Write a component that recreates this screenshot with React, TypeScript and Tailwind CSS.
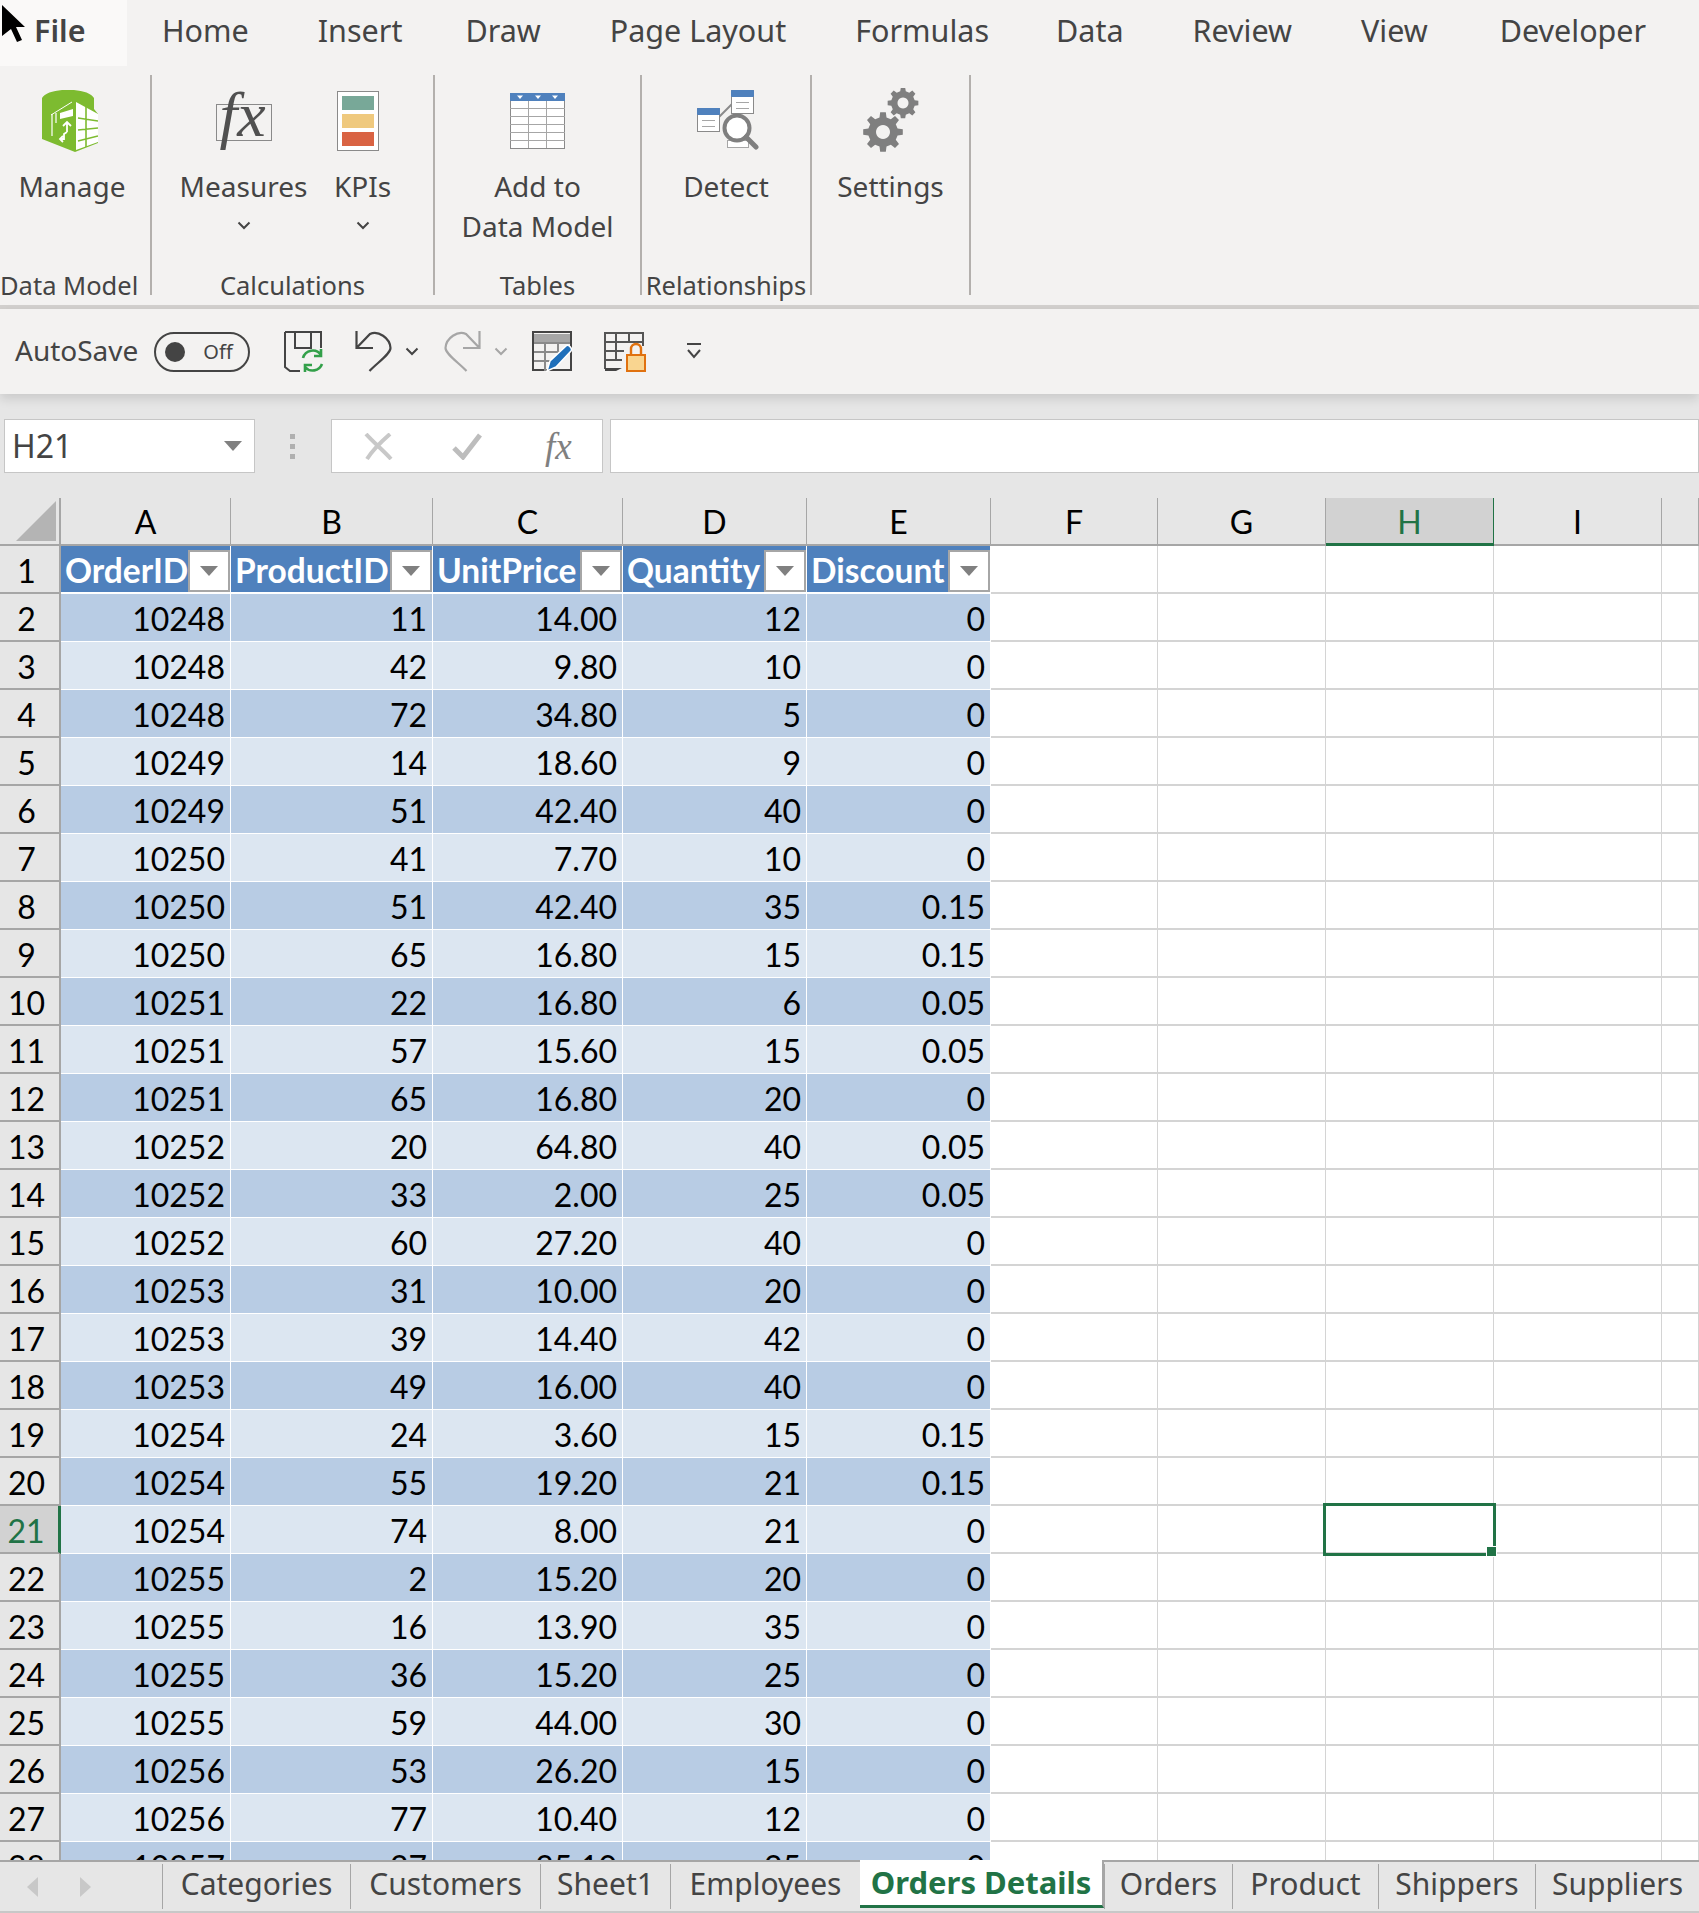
import React from 'react';

// Sheet data: [OrderID, ProductID, UnitPrice, Quantity, Discount]
const rows: string[][] = [
  ['10248', '11', '14.00', '12', '0'],
  ['10248', '42', '9.80', '10', '0'],
  ['10248', '72', '34.80', '5', '0'],
  ['10249', '14', '18.60', '9', '0'],
  ['10249', '51', '42.40', '40', '0'],
  ['10250', '41', '7.70', '10', '0'],
  ['10250', '51', '42.40', '35', '0.15'],
  ['10250', '65', '16.80', '15', '0.15'],
  ['10251', '22', '16.80', '6', '0.05'],
  ['10251', '57', '15.60', '15', '0.05'],
  ['10251', '65', '16.80', '20', '0'],
  ['10252', '20', '64.80', '40', '0.05'],
  ['10252', '33', '2.00', '25', '0.05'],
  ['10252', '60', '27.20', '40', '0'],
  ['10253', '31', '10.00', '20', '0'],
  ['10253', '39', '14.40', '42', '0'],
  ['10253', '49', '16.00', '40', '0'],
  ['10254', '24', '3.60', '15', '0.15'],
  ['10254', '55', '19.20', '21', '0.15'],
  ['10254', '74', '8.00', '21', '0'],
  ['10255', '2', '15.20', '20', '0'],
  ['10255', '16', '13.90', '35', '0'],
  ['10255', '36', '15.20', '25', '0'],
  ['10255', '59', '44.00', '30', '0'],
  ['10256', '53', '26.20', '15', '0'],
  ['10256', '77', '10.40', '12', '0'],
  ['10257', '27', '35.10', '25', '0'],
];

const headers = ['OrderID', 'ProductID', 'UnitPrice', 'Quantity', 'Discount'];
const letters = ['A', 'B', 'C', 'D', 'E', 'F', 'G', 'H', 'I', ''];
const gridCols = 'grid grid-cols-[61px_170px_202px_190px_184px_184px_167px_168px_168px_168px_1fr]';

const ribbonTabs = [
  { name: 'Home', cls: '' },
  { name: 'Insert', cls: 'mr-[-6px]' },
  { name: 'Draw', cls: '' },
  { name: 'Page Layout', cls: '' },
  { name: 'Formulas', cls: 'mr-[-2px]' },
  { name: 'Data', cls: '' },
  { name: 'Review', cls: '' },
  { name: 'View', cls: 'mr-[3px]' },
  { name: 'Developer', cls: '' },
];

const sheetTabs = [
  { name: 'Categories', w: 'w-[188px]' },
  { name: 'Customers', w: 'w-[190px]' },
  { name: 'Sheet1', w: 'w-[130px]' },
  { name: 'Employees', w: 'w-[190px]' },
  { name: 'Orders Details', w: 'w-[244px]', active: true },
  { name: 'Orders', w: 'w-[128px]' },
  { name: 'Product', w: 'w-[146px]' },
  { name: 'Shippers', w: 'w-[157px]' },
  { name: 'Suppliers', w: 'w-[164px]' },
];

function gearPath(cx: number, cy: number, rOut: number, rIn: number, teeth: number) {
  const pts: string[] = [];
  const step = (Math.PI * 2) / teeth;
  for (let i = 0; i < teeth; i++) {
    const a = i * step - Math.PI / 2;
    const corners: [number, number][] = [
      [a - step * 0.3, rIn],
      [a - step * 0.18, rOut],
      [a + step * 0.18, rOut],
      [a + step * 0.3, rIn],
    ];
    corners.forEach(([ang, r]) => {
      pts.push(`${(cx + Math.cos(ang) * r).toFixed(2)} ${(cy + Math.sin(ang) * r).toFixed(2)}`);
    });
  }
  return `M${pts.join('L')}Z`;
}

function ManageIcon() {
  return (
    <svg width="56" height="62" viewBox="0 0 56 62" className="mr-[4px]">
      <path d="M0 8C6 -3 46 -3 52 8V19L56 24V53L33 62L0 49Z" fill="#7dbb30" />
      <path d="M34 12L56 24V52L34 60Z" fill="#fff" />
      <path d="M36 28L56 31M36 40L56 38M36 51L56 46M44 16V57" stroke="#7dbb30" strokeWidth="1.6" fill="none" />
      <path d="M18 23L31 19V26L18 29Z" fill="#fff" />
      <path d="M10 24V46M14 23V33" stroke="#fff" strokeWidth="1.2" />
      <path d="M9 25L30 12" stroke="#fff" strokeWidth="1" />
      <path d="M25 42V33M21 36L25 32L29 36M25 42L22 44V49H19M21 46L18 49L21 52" stroke="#fff" strokeWidth="1.8" fill="none" />
    </svg>
  );
}

function FxIcon() {
  return (
    <div className="relative h-[58px] w-[56px]">
      <div className="absolute left-0 right-0 top-[12px] h-[37px] border border-[#8a8a8a]" />
      <span className="absolute left-[4px] top-[-15px] text-[64px] italic leading-[76px] text-[#505050] [font-family:'Liberation_Serif',serif]">
        fx
      </span>
    </div>
  );
}

function KpiIcon() {
  return (
    <div className="mr-[10px] flex h-[60px] w-[42px] flex-col gap-[4px] border border-[#8a8a8a] bg-white p-[4px]">
      <div className="h-[14px] bg-[#78a898]" />
      <div className="h-[14px] bg-[#efc97e]" />
      <div className="h-[14px] bg-[#d96343]" />
    </div>
  );
}

function TableIcon() {
  return (
    <svg width="56" height="56" viewBox="0 0 56 56">
      <rect x="0.5" y="0.5" width="54" height="55" fill="#fff" stroke="#8a8a8a" />
      <rect x="0" y="0" width="55" height="8" fill="#4f81bd" />
      <path d="M18.5 8V55M36.5 8V55M0 15.5H55M0 23.5H55M0 31.5H55M0 39.5H55M0 47.5H55" stroke="#a6a6a6" fill="none" />
      <path d="M7 2.5H13L10 6ZM25 2.5H31L28 6ZM42 2.5H48L45 6Z" fill="#fff" />
    </svg>
  );
}

function DetectIcon() {
  const tbl = (x: number, y: number) => (
    <g>
      <rect x={x + 0.5} y={y + 0.5} width="22" height="23" fill="#fff" stroke="#8a8a8a" />
      <rect x={x} y={y} width="23" height="7" rx="1" fill="#4f81bd" />
      <path d={`M${x + 5} ${y + 12.5}H${x + 18}M${x + 5} ${y + 18.5}H${x + 18}`} stroke="#a6a6a6" />
    </g>
  );
  return (
    <svg width="62" height="60" viewBox="0 0 62 60" className="mb-[1px] ml-[3px]">
      <path d="M22 27L36 13" stroke="#8a8a8a" strokeWidth="2" />
      {tbl(0, 18)}
      {tbl(34, 0)}
      <rect x="30.5" y="50.5" width="21" height="7" fill="#fff" stroke="#a6a6a6" />
      <circle cx="40" cy="38" r="12.5" fill="#fff" stroke="#7f7f7f" strokeWidth="4" />
      <path d="M49 47L59 57" stroke="#7f7f7f" strokeWidth="5" strokeLinecap="round" />
    </svg>
  );
}

function SettingsIcon() {
  return (
    <svg width="56" height="66" viewBox="0 0 56 66">
      <path fillRule="evenodd" d={`${gearPath(20, 44, 20, 15, 8)}M20 37a7 7 0 1 0 0.01 0Z`} fill="#7f7f7f" />
      <path fillRule="evenodd" d={`${gearPath(40, 15, 15.5, 12, 8)}M40 9.5a5.5 5.5 0 1 0 0.01 0Z`} fill="#7f7f7f" />
    </svg>
  );
}

function Chevron({ className }: { className: string }) {
  return (
    <svg width="14" height="9" viewBox="0 0 14 9" className={className}>
      <path d="M1.5 1.5L7 7L12.5 1.5" fill="none" stroke="currentColor" strokeWidth="2" />
    </svg>
  );
}

function SaveIcon() {
  return (
    <svg width="41" height="42" viewBox="0 0 41 42">
      <path d="M1 1V36L6 40H16M1 1H37V17M11 1V17H27V1" fill="none" stroke="#444" strokeWidth="2" />
      <path d="M19 27A10 10 0 0 1 37 24M37 18V25H30M38 33A10 10 0 0 1 21 36M21 41V34H28" fill="none" stroke="#33a04a" strokeWidth="2.6" />
    </svg>
  );
}

function ArrowIcon({ color }: { color: string }) {
  return (
    <svg width="37" height="41" viewBox="0 0 37 41">
      <path d="M1.5 0V17H18M1.5 17L15 3C23 -1 35 7 35.5 17C35.5 23 22 32 14.5 40" fill="none" stroke={color} strokeWidth="2.2" />
    </svg>
  );
}

function TableEditIcon() {
  return (
    <svg width="41" height="41" viewBox="0 0 41 41">
      <rect x="1" y="1" width="38" height="38" fill="none" stroke="#444" strokeWidth="2" />
      <rect x="2" y="3" width="36" height="8" fill="#a6a6a6" />
      <path d="M2 12H38M2 21H38M2 30H26M13 12V40M26 12V30" stroke="#8a8a8a" strokeWidth="2" fill="none" />
      <path d="M15 40L18 30L34 15C36 13 41 17 39 20L24 36Z" fill="#1f6fba" stroke="#fff" strokeWidth="1.5" />
    </svg>
  );
}

function TableLockIcon() {
  return (
    <svg width="42" height="40" viewBox="0 0 42 40">
      <path d="M1 37V1H39V14M1 10H39M1 19H20M1 28H18M12 1V28M25 1V10" fill="none" stroke="#555" strokeWidth="2" />
      <path d="M1 36H18L12 39H1Z" fill="#444" />
      <rect x="23" y="23" width="18" height="16" fill="#f9d590" stroke="#e0710f" strokeWidth="2" />
      <path d="M27 22V17A5 5 0 0 1 37 17V22" fill="none" stroke="#e0710f" strokeWidth="2.4" />
    </svg>
  );
}

function RibbonButton({
  icon,
  label,
  chevron,
  width,
}: {
  icon: React.ReactNode;
  label: React.ReactNode;
  chevron?: boolean;
  width: string;
}) {
  return (
    <div className={`flex flex-col items-center ${width}`}>
      <div className="flex h-[91px] items-center">{icon}</div>
      <div className="whitespace-nowrap text-center text-[28px] leading-[40px]">{label}</div>
      {chevron && <Chevron className="mt-[15px] text-[#444]" />}
    </div>
  );
}

function Group({ width, label, children, labelClass = '' }: { width: string; label: string; children: React.ReactNode; labelClass?: string }) {
  return (
    <div className={`flex h-[220px] flex-col border-r-2 border-[#b3b0ad] ${width}`}>
      <div className="flex flex-1 justify-center">{children}</div>
      <div className={`-mb-[5px] whitespace-nowrap text-center text-[25.5px] leading-[30px] ${labelClass}`}>{label}</div>
    </div>
  );
}

export default function App() {
  return (
    <div className="flex h-screen w-full flex-col overflow-hidden bg-white text-[#444] [font-family:'Noto_Sans',sans-serif]">
      {/* Ribbon */}
      <div className="relative h-[309px] shrink-0 border-b-4 border-[#d2d0ce] bg-[#f3f2f1]">
        <div className="flex h-[66px] items-center gap-[69px] text-[30.5px]">
          <div className="mr-[-34px] flex h-full w-[127px] items-center bg-[#faf9f8] pb-[5px] pl-[34px] font-semibold">File</div>
          {ribbonTabs.map(t => (
            <span key={t.name} className={`pb-[5px] ${t.cls}`}>{t.name}</span>
          ))}
        </div>
        <svg width="24" height="37" viewBox="0 0 24 37" className="absolute left-[2px] top-[5px]">
          <path d="M0 0L23 22H14L20 35L15 37L9 24L0 31Z" fill="#000" />
        </svg>

        <div className="mt-[9px] flex">
          <Group width="w-[152px]" label="Data Model" labelClass="pr-[12px]">
            <RibbonButton icon={<ManageIcon />} label="Manage" width="w-[144px]" />
            <div className="w-[6px]" />
          </Group>
          <Group width="w-[283px]" label="Calculations">
            <RibbonButton icon={<FxIcon />} label="Measures" chevron width="w-[124px]" />
            <div className="w-[30px]" />
            <RibbonButton icon={<KpiIcon />} label="KPIs" chevron width="w-[54px]" />
            <div className="w-[14px]" />
          </Group>
          <Group width="w-[207px]" label="Tables">
            <RibbonButton icon={<TableIcon />} label={<>Add to<br />Data Model</>} width="w-[160px]" />
          </Group>
          <Group width="w-[170px]" label="Relationships">
            <RibbonButton icon={<DetectIcon />} label="Detect" width="w-[120px]" />
          </Group>
          <Group width="w-[159px]" label="">
            <RibbonButton icon={<SettingsIcon />} label="Settings" width="w-[120px]" />
          </Group>
        </div>
      </div>

      {/* Quick access toolbar */}
      <div className="relative z-10 flex h-[85px] shrink-0 items-center bg-[#f3f2f1] pl-[15px] shadow-[0_5px_10px_rgba(0,0,0,0.12)]">
        <span className="pb-[3px] text-[28px]">AutoSave</span>
        <div className="ml-[16px] flex h-[40px] w-[96px] items-center rounded-full border-2 border-[#444] pl-[9px]">
          <div className="h-[20px] w-[20px] rounded-full bg-[#444]" />
          <span className="ml-[18px] text-[20px]">Off</span>
        </div>
        <div className="ml-[34px] flex"><SaveIcon /></div>
        <div className="ml-[30px] flex"><ArrowIcon color="#444" /></div>
        <Chevron className="ml-[13px] text-[#444]" />
        <div className="ml-[25px] flex -scale-x-100"><ArrowIcon color="#a6a6a6" /></div>
        <Chevron className="ml-[13px] text-[#a6a6a6]" />
        <div className="ml-[24px] flex"><TableEditIcon /></div>
        <div className="ml-[31px] flex"><TableLockIcon /></div>
        <svg width="16" height="17" viewBox="0 0 16 17" className="ml-[40px]">
          <path d="M1 1H15M2 7L8 14L14 7" fill="none" stroke="#444" strokeWidth="2" />
        </svg>
      </div>

      {/* Formula bar */}
      <div className="flex h-[104px] shrink-0 items-center bg-[#e6e6e6] pl-[4px]">
        <div className="flex h-[54px] w-[251px] items-center justify-between border border-[#c6c6c6] bg-white pl-[7px] pr-[12px] text-[32px]">
          <span>H21</span>
          <svg width="18" height="10" viewBox="0 0 18 10">
            <path d="M0 0H18L9 10Z" fill="#808080" />
          </svg>
        </div>
        <div className="ml-[35px] flex flex-col gap-[5px]">
          <div className="h-[5px] w-[5px] bg-[#b0b0b0]" />
          <div className="h-[5px] w-[5px] bg-[#b0b0b0]" />
          <div className="h-[5px] w-[5px] bg-[#b0b0b0]" />
        </div>
        <div className="ml-[36px] flex h-[54px] w-[272px] items-center border border-[#c6c6c6] bg-white pl-[32px]">
          <svg width="29" height="27" viewBox="0 0 29 27">
            <path d="M2 1C8 8 20 18 27 26M26 1C18 8 8 18 3 26" fill="none" stroke="#c8c8c8" strokeWidth="4" />
          </svg>
          <svg width="30" height="27" viewBox="0 0 30 27" className="ml-[59px]">
            <path d="M2 15L11 24L28 2" fill="none" stroke="#bdbdbd" strokeWidth="5" />
          </svg>
          <span className="ml-[63px] text-[37px] italic leading-none text-[#808080] [font-family:'Liberation_Serif',serif]">fx</span>
        </div>
        <div className="ml-[7px] h-[54px] flex-1 border border-[#c6c6c6] bg-white" />
      </div>

      {/* Sheet */}
      <div className="h-[1362px] shrink-0 overflow-hidden text-[32px] leading-none text-black [font-family:Lato,sans-serif]">
        <div className={`${gridCols} h-[48px] bg-[#e6e6e6]`}>
          <div className="flex items-end justify-end border-b-2 border-r-2 border-[#a6a6a6] pb-[3px] pr-[3px]">
            <svg width="40" height="40" viewBox="0 0 40 40">
              <path d="M40 0V40H0Z" fill="#b4b4b4" />
            </svg>
          </div>
          {letters.map((l, i) =>
            l === 'H' ? (
              <div key={i} className="flex items-center justify-center border-b-[3px] border-r border-[#217346] bg-[#d2d2d2] pt-[2px] text-[#217346]">
                {l}
              </div>
            ) : (
              <div key={i} className="flex items-center justify-center border-b-2 border-r border-[#a6a6a6] pt-[2px]">
                {l}
              </div>
            ),
          )}
        </div>

        {/* Row 1: table header */}
        <div className={`${gridCols} h-[48px]`}>
          <div className="flex items-center justify-center border-b-2 border-r-2 border-[#a6a6a6] bg-[#e6e6e6] pr-[6px] pt-[3px]">1</div>
          {headers.map(h => (
            <div key={h} className="relative flex items-center border-b-2 border-r border-white bg-[#4f81bd] pl-[4px] pt-[3px] text-[33.5px] font-bold text-white">
              {h}
              <div className="absolute right-0 top-[4px] flex h-[42px] w-[42px] items-center justify-center border-2 border-[#a6a6a6] bg-white">
                <svg width="18" height="10" viewBox="0 0 18 10">
                  <path d="M0 0H18L9 10Z" fill="#808080" />
                </svg>
              </div>
            </div>
          ))}
          {[0, 1, 2, 3, 4].map(i => (
            <div key={i} className="border-b-2 border-r border-[#d4d4d4]" />
          ))}
        </div>

        {rows.map((r, idx) => {
          const num = idx + 2;
          const band = num % 2 === 0 ? 'bg-[#b8cce4]' : 'bg-[#dce6f1]';
          const selected = num === 21;
          return (
            <div key={num} className={`${gridCols} h-[48px]`}>
              {selected ? (
                <div className="flex items-center justify-center border-b-2 border-r-[3px] border-b-[#a6a6a6] border-r-[#217346] bg-[#d2d2d2] pr-[6px] pt-[3px] text-[#217346]">{num}</div>
              ) : (
                <div className="flex items-center justify-center border-b-2 border-r-2 border-[#a6a6a6] bg-[#e6e6e6] pr-[6px] pt-[3px]">{num}</div>
              )}
              {r.map((v, c) => (
                <div key={c} className={`flex items-center justify-end border-b border-r border-white pr-[5px] pt-[3px] ${band}`}>
                  {v}
                </div>
              ))}
              {[0, 1, 2, 3, 4].map(i => (
                <div key={i} className="relative border-b-2 border-r border-[#d4d4d4]">
                  {selected && i === 2 && (
                    <div className="absolute -left-[3px] -top-[3px] z-10 h-[53px] w-[173px] border-[3px] border-[#217346]">
                      <div className="absolute -bottom-[4px] -right-[4px] h-[11px] w-[11px] border border-white bg-[#217346]" />
                    </div>
                  )}
                </div>
              ))}
            </div>
          );
        })}
      </div>

      {/* Sheet tabs */}
      <div className="relative z-20 flex h-[51px] shrink-0 border-t-2 border-[#a6a6a6] bg-[#e6e6e6] text-[30px]">
        <div className="flex w-[162px] items-center pl-[27px]">
          <svg width="11" height="20" viewBox="0 0 11 20">
            <path d="M11 0V20L0 10Z" fill="#c8c8c8" />
          </svg>
          <svg width="11" height="20" viewBox="0 0 11 20" className="ml-[42px]">
            <path d="M0 0V20L11 10Z" fill="#c8c8c8" />
          </svg>
        </div>
        {sheetTabs.map(t =>
          t.active ? (
            <div key={t.name} className={`-mt-[2px] mb-[3px] flex items-center justify-center border-b-[3px] border-r-2 border-b-[#217346] border-r-[#a6a6a6] bg-white pb-[1px] text-[31px] font-bold text-[#217346] ${t.w}`}>
              {t.name}
            </div>
          ) : (
            <div key={t.name} className={`my-[2px] flex items-center justify-center border-l border-[#a6a6a6] pb-[6px] ${t.w}`}>
              {t.name}
            </div>
          ),
        )}
      </div>
      <div className="h-[2px] shrink-0 bg-[#c8c8c8]" />
    </div>
  );
}
